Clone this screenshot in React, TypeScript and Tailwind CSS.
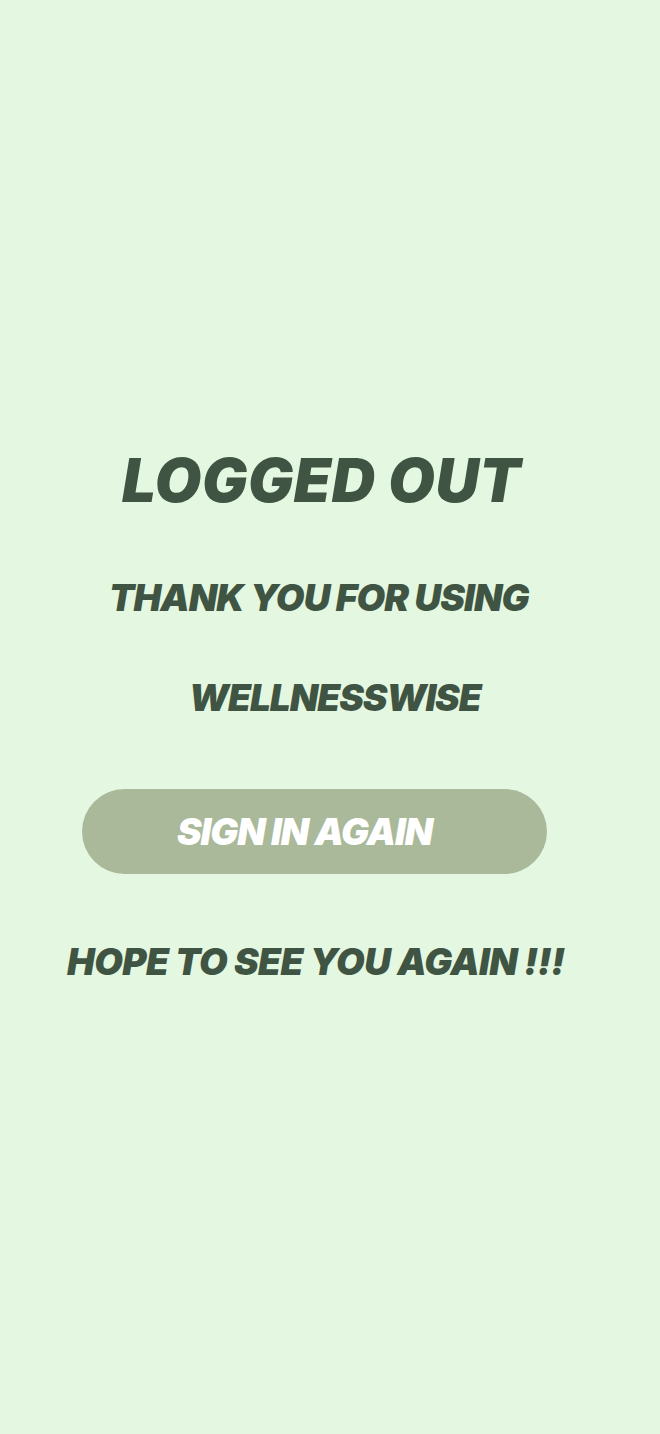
export default function App() {
  return (
    <div
      className="min-h-[1434px] w-full bg-[#e4f7e0] flex flex-col items-start pt-[446px] text-[#3f5443] italic font-black"
      style={{ fontFamily: 'Inter, "Noto Sans", sans-serif' }}
    >
      <h1 className="ml-[122px] text-[60px] leading-[68px] tracking-[0.01em]">LOGGED OUT</h1>
      <p className="ml-[109px] mt-[62px] text-[37px] leading-[44px] tracking-[-0.025em]">THANK YOU FOR USING</p>
      <p className="ml-[189px] mt-[56px] text-[37px] leading-[44px] tracking-[-0.028em]">WELLNESSWISE</p>
      <button className="ml-[82px] mt-[69px] w-[465px] h-[85px] rounded-full bg-[#a9b99a] text-white text-[37px] tracking-[-0.028em] italic font-black flex items-center pl-[95px]">
        SIGN IN AGAIN
      </button>
      <p className="ml-[67px] mt-[66px] text-[37px] leading-[44px] tracking-[-0.015em]">HOPE TO SEE YOU AGAIN !!!</p>
    </div>
  );
}
